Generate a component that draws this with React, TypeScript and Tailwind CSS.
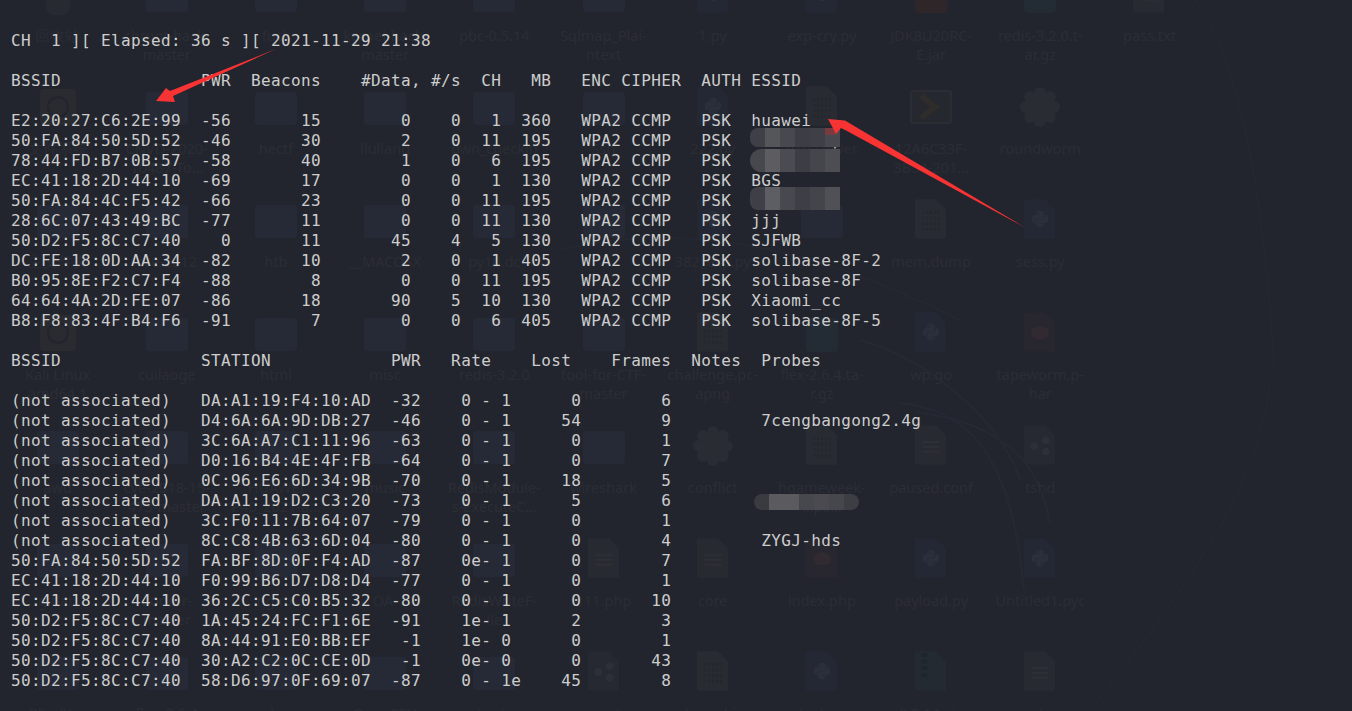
import { FaPython } from 'react-icons/fa';

type IconKind = 'none' | 'folder' | 'doc' | 'py' | 'bin' | 'gear' | 'disc' | 'trash' | 'php' | 'zip' | 'red' | 'teal' | 'term' | 'share';

const desktop: [IconKind, string][] = [
  // fila 0
  ['trash', '回收站'], ['folder', 'chroot-hack-\nmaster'], ['folder', 'fuck'], ['folder', 'kernel-hack-\nmaster'], ['folder', 'pbc-0.5.14'], ['folder', 'Sqlmap_Plai-\nntext'], ['py', '1.py'], ['py', 'exp-cry.py'], ['red', 'JDK8U20RC-\nE.jar'], ['teal', 'redis-3.2.0.t-\nar.gz'], ['doc', 'pass.txt'],
  // fila 1
  ['disc', '文件系统'], ['folder', 'CNVD-2020-\n10487-To…'], ['folder', 'hectf'], ['folder', 'liuliang'], ['folder', 'pwn_checkin'], ['folder', 'Ssh'], ['py', '222.py'], ['bin', 'exp-server'], ['term', '12A6C33F-\n3B54-201…'], ['gear', 'roundworm'], ['none', ''],
  // fila 2
  ['folder', '主文件夹'], ['folder', 'cve-2012'], ['folder', 'htb'], ['folder', '__MACOSX'], ['folder', 'py10.dc'], ['folder', ''], ['py', '382_exp.py'], ['folder', ''], ['bin', 'mem.dump'], ['py', 'sess.py'], ['none', ''],
  // fila 3
  ['disc', 'Kali Linux\namd64.1'], ['folder', 'cuilaoge'], ['folder', 'html'], ['folder', 'misc'], ['folder', 'redis-3.2.0'], ['folder', 'tool-for-CTF-\nmaster'], ['bin', 'challenge.pc-\napng'], ['teal', 'flex-2.6.4.ta-\nr.gz'], ['py', 'wp.go'], ['php', 'tapeworm.p-\nhar'], ['none', ''],
  // fila 4
  ['folder', 'awd'], ['folder', 'cve-2018-15-\n473-master'], ['folder', 'HUAWEI\nP40_2021-a…'], ['folder', 'music'], ['folder', 'RedisModule-\ns-ExecuteC…'], ['folder', 'wireshark'], ['gear', 'conflict'], ['bin', 'hgameweek-\n…pa…'], ['doc', 'paused.conf'], ['share', 'tshd'], ['none', ''],
  // fila 5
  ['folder', 'gitlab'], ['folder', 'docker-\nmaster'], ['folder', 'nginx'], ['folder', 'OA-'], ['folder', 'RedisWriteF-\nile'], ['doc', '111.php'], ['doc', 'core'], ['php', 'index.php'], ['py', 'payload.py'], ['py', 'Untitled1.pyc'], ['none', ''],
  // fila 6
  ['folder', 'BlindXor'], ['folder', 'flag-2.6.4'], ['folder', 'rockyou'], ['folder', 'OpenSSH'], ['folder', 'tools'], ['share', 'a.out'], ['bin', 'dump.bin'], ['py', 'test.py'], ['zip', '0.5.14.zip'], ['doc', 'notes'], ['none', ''],
];

function DocShape({ fill, children }: { fill: string; children?: React.ReactNode }) {
  return (
    <svg width="32" height="40" viewBox="0 0 34 42">
      <path d="M2 0H22L33 11V40a2 2 0 0 1-2 2H2a2 2 0 0 1-2-2V2a2 2 0 0 1 2-2z" fill={fill} />
      {children}
    </svg>
  );
}

function DesktopIcon({ kind }: { kind: IconKind }) {
  if (kind === 'none') return null;
  if (kind === 'folder') return <div className="mt-[6px] h-[33px] w-[42px] rounded-[3px] bg-[#262a36]" />;
  if (kind === 'trash') return <div className="mt-[6px] h-[36px] w-[24px] rounded-b-lg bg-[#282a31]" />;
  if (kind === 'disc')
    return (
      <div className="mt-[3px] flex h-[36px] w-[36px] items-center justify-center rounded bg-[#292b31]">
        <div className="h-[22px] w-[22px] rounded-full border-2 border-[#22252d]" />
      </div>
    );
  if (kind === 'gear')
    return (
      <svg width="42" height="42" viewBox="0 0 42 42" fill="#2a2c34">
        <circle cx="21" cy="21" r="15" />
        {[0, 45, 90, 135, 180, 225, 270, 315].map((a) => (
          <circle key={a} cx="21" cy="7" r="6" transform={`rotate(${a} 21 21)`} />
        ))}
      </svg>
    );
  if (kind === 'term')
    return (
      <svg width="42" height="34" viewBox="0 0 42 34" className="mt-[4px]">
        <rect x="1" y="1" width="40" height="32" rx="2" fill="#25282f" stroke="#2b2d34" strokeWidth="2" />
        <path d="M11 6l14 11-14 11" fill="none" stroke="#2f2c2a" strokeWidth="6" />
      </svg>
    );
  if (kind === 'py')
    return (
      <DocShape fill="#242834">
        <foreignObject x="7" y="11" width="20" height="20">
          <FaPython className="text-[20px] text-[#2b2f3b]" />
        </foreignObject>
      </DocShape>
    );
  if (kind === 'php')
    return (
      <DocShape fill="#28262e">
        <ellipse cx="17" cy="22" rx="10" ry="7" fill="#322a31" />
      </DocShape>
    );
  if (kind === 'bin')
    return (
      <DocShape fill="#292b32">
        <path d="M8 14h18M8 20h18M8 26h18M8 32h18" stroke="#25272e" strokeWidth="3" strokeDasharray="2 2" />
      </DocShape>
    );
  if (kind === 'zip')
    return (
      <DocShape fill="#242a31">
        <path d="M10 2v28" stroke="#1f252c" strokeWidth="6" strokeDasharray="4 3" />
      </DocShape>
    );
  if (kind === 'share')
    return (
      <DocShape fill="#272932">
        <circle cx="11" cy="22" r="4" fill="#2e3039" />
        <circle cx="23" cy="16" r="4" fill="#2e3039" />
        <circle cx="23" cy="28" r="4" fill="#2e3039" />
      </DocShape>
    );
  if (kind === 'red') return <div className="mt-[6px] h-[34px] w-[32px] rounded-sm bg-[#2f2629]" />;
  if (kind === 'teal') return <div className="mt-[6px] h-[34px] w-[32px] rounded-sm bg-[#232c35]" />;
  return (
    <DocShape fill="#282a31">
      <path d="M8 18h18M8 23h18M8 28h18" stroke="#2e3037" strokeWidth="2" />
    </DocShape>
  );
}

function Desktop() {
  return (
    <div className="absolute inset-0 overflow-hidden">
      {/* Líneas del fondo de Kali */}
      <svg className="absolute inset-0" width="1352" height="711" fill="none" stroke="#262935" strokeWidth="2">
        <path d="M900 403C960 410 1010 440 1024 590" />
        <path d="M915 412C985 420 1040 450 1050 525" />
        <path d="M860 340C930 360 1000 420 1020 480" />
        <path d="M560 250C700 215 840 260 960 320" stroke="#252833" />
        <path d="M1270 380C1260 500 1160 620 1090 711" stroke="#24272f" />
        <path d="M1195 0C1240 60 1265 200 1275 380" stroke="#24272f" />
      </svg>
      {/* Iconos del escritorio */}
      <div className="relative ml-[3px] mt-[-27px] grid grid-cols-[repeat(11,109.2px)] auto-rows-[113px] font-['Noto_Sans',sans-serif] text-[14.5px] leading-[19px] text-[#2b2d35]">
        {desktop.map(([kind, label], i) => (
          <div key={i} className="flex flex-col items-center">
            <div className="flex h-[42px] items-start justify-center">
              <DesktopIcon kind={kind} />
            </div>
            <div className="mt-[11px] whitespace-pre text-center">{label}</div>
          </div>
        ))}
      </div>
    </div>
  );
}

function ap(bssid: string, pwr: string, beacons: string, data: string, s: string, ch: string, mb: string, essid: string) {
  return (
    bssid + '  ' + pwr.padStart(3) + beacons.padStart(9) + data.padStart(9) + s.padStart(5) + ch.padStart(4) + mb.padStart(5) + '   WPA2 CCMP   PSK  ' + essid
  );
}

function st(bssid: string, station: string, pwr: string, rate: string, lost: string, frames: string, probe = '') {
  return (
    bssid.padEnd(19) + station + '  ' + pwr + '    ' + rate.padEnd(6) + lost.padStart(6) + frames.padStart(9) + (probe ? '         ' + probe : '')
  );
}

const NA = '(not associated)';

const lines = [
  'CH  1 ][ Elapsed: 36 s ][ 2021-11-29 21:38',
  '',
  'BSSID              PWR  Beacons    #Data, #/s  CH   MB   ENC CIPHER  AUTH ESSID',
  '',
  ap('E2:20:27:C6:2E:99', '-56', '15', '0', '0', '1', '360', 'huawei'),
  ap('50:FA:84:50:5D:52', '-46', '30', '2', '0', '11', '195', '        )'),
  ap('78:44:FD:B7:0B:57', '-58', '40', '1', '0', '6', '195', ''),
  ap('EC:41:18:2D:44:10', '-69', '17', '0', '0', '1', '130', 'BGS'),
  ap('50:FA:84:4C:F5:42', '-66', '23', '0', '0', '11', '195', ''),
  ap('28:6C:07:43:49:BC', '-77', '11', '0', '0', '11', '130', 'jjj'),
  ap('50:D2:F5:8C:C7:40', '0', '11', '45', '4', '5', '130', 'SJFWB'),
  ap('DC:FE:18:0D:AA:34', '-82', '10', '2', '0', '1', '405', 'solibase-8F-2'),
  ap('B0:95:8E:F2:C7:F4', '-88', '8', '0', '0', '11', '195', 'solibase-8F'),
  ap('64:64:4A:2D:FE:07', '-86', '18', '90', '5', '10', '130', 'Xiaomi_cc'),
  ap('B8:F8:83:4F:B4:F6', '-91', '7', '0', '0', '6', '405', 'solibase-8F-5'),
  '',
  'BSSID              STATION            PWR   Rate    Lost    Frames  Notes  Probes',
  '',
  st(NA, 'DA:A1:19:F4:10:AD', '-32', '0 - 1', '0', '6'),
  st(NA, 'D4:6A:6A:9D:DB:27', '-46', '0 - 1', '54', '9', '7cengbangong2.4g'),
  st(NA, '3C:6A:A7:C1:11:96', '-63', '0 - 1', '0', '1'),
  st(NA, 'D0:16:B4:4E:4F:FB', '-64', '0 - 1', '0', '7'),
  st(NA, '0C:96:E6:6D:34:9B', '-70', '0 - 1', '18', '5'),
  st(NA, 'DA:A1:19:D2:C3:20', '-73', '0 - 1', '5', '6'),
  st(NA, '3C:F0:11:7B:64:07', '-79', '0 - 1', '0', '1'),
  st(NA, '8C:C8:4B:63:6D:04', '-80', '0 - 1', '0', '4', 'ZYGJ-hds'),
  st('50:FA:84:50:5D:52', 'FA:BF:8D:0F:F4:AD', '-87', '0e- 1', '0', '7'),
  st('EC:41:18:2D:44:10', 'F0:99:B6:D7:D8:D4', '-77', '0 - 1', '0', '1'),
  st('EC:41:18:2D:44:10', '36:2C:C5:C0:B5:32', '-80', '0 - 1', '0', '10'),
  st('50:D2:F5:8C:C7:40', '1A:45:24:FC:F1:6E', '-91', '1e- 1', '2', '3'),
  st('50:D2:F5:8C:C7:40', '8A:44:91:E0:BB:EF', ' -1', '1e- 0', '0', '1'),
  st('50:D2:F5:8C:C7:40', '30:A2:C2:0C:CE:0D', ' -1', '0e- 0', '0', '43'),
  st('50:D2:F5:8C:C7:40', '58:D6:97:0F:69:07', '-87', '0 - 1e', '45', '8'),
];

function MosaicRow({ className, cells }: { className: string; cells: string[] }) {
  return (
    <div className={`absolute flex overflow-hidden ${className}`}>
      {cells.map((c, i) => (
        <div key={i} className={`h-full w-[15px] ${c}`} />
      ))}
    </div>
  );
}

export default function App() {
  return (
    <div className="relative h-[711px] w-[1352px] overflow-hidden bg-[#22252d]">
      <Desktop />

      {/* Salida de airodump-ng */}
      <pre className="relative pl-[11px] pt-[31px] font-['DejaVu_Sans_Mono',monospace] text-[16px] leading-[20px] tracking-[0.37px] text-[#cdcdcd]">
        {lines.join('\n')}
      </pre>

      {/* Zonas pixeladas que tapan los ESSID */}
      <MosaicRow
        className="left-[750px] top-[128px] h-[19px] rounded-l-lg"
        cells={['bg-[#3f4047]', 'bg-[#55565a]', 'bg-[#48494f]', 'bg-[#3c3e45]', 'bg-[#3f4047]', 'bg-[#474850]']}
      />
      <div className="absolute left-[825px] top-[128px] h-[7px] w-[11px] bg-[#7a3a40]" />
      <MosaicRow
        className="left-[750px] top-[149px] h-[23px] rounded-l-xl"
        cells={['bg-[#47484d]', 'bg-[#5d5d61]', 'bg-[#4b4c51]', 'bg-[#3c3e45]', 'bg-[#45464c]', 'bg-[#4d4e53]']}
      />
      <MosaicRow
        className="left-[750px] top-[187px] h-[23px] rounded-l-lg"
        cells={['bg-[#3f4047]', 'bg-[#5d5e63]', 'bg-[#48494f]', 'bg-[#3e3f46]', 'bg-[#44454b]', 'bg-[#505157]']}
      />
      <MosaicRow
        className="left-[754px] top-[494px] h-[16px] rounded-full"
        cells={['w-[11px] bg-[#3a3b41]', 'bg-[#5a5a5f]', 'bg-[#5a5a5f]', 'bg-[#47484d]', 'bg-[#4a4a50]', 'bg-[#46474c]', 'bg-[#3d3e44]']}
      />

      {/* Flechas rojas */}
      <svg className="absolute inset-0" width="1352" height="711" fill="#f73333">
        <polygon points="156,101 166,88 170,91 276,49 173,96 175,102" />
        <polygon points="828,119 845,120.5 1026,228 847,131 841,128 836,134" />
      </svg>
    </div>
  );
}
